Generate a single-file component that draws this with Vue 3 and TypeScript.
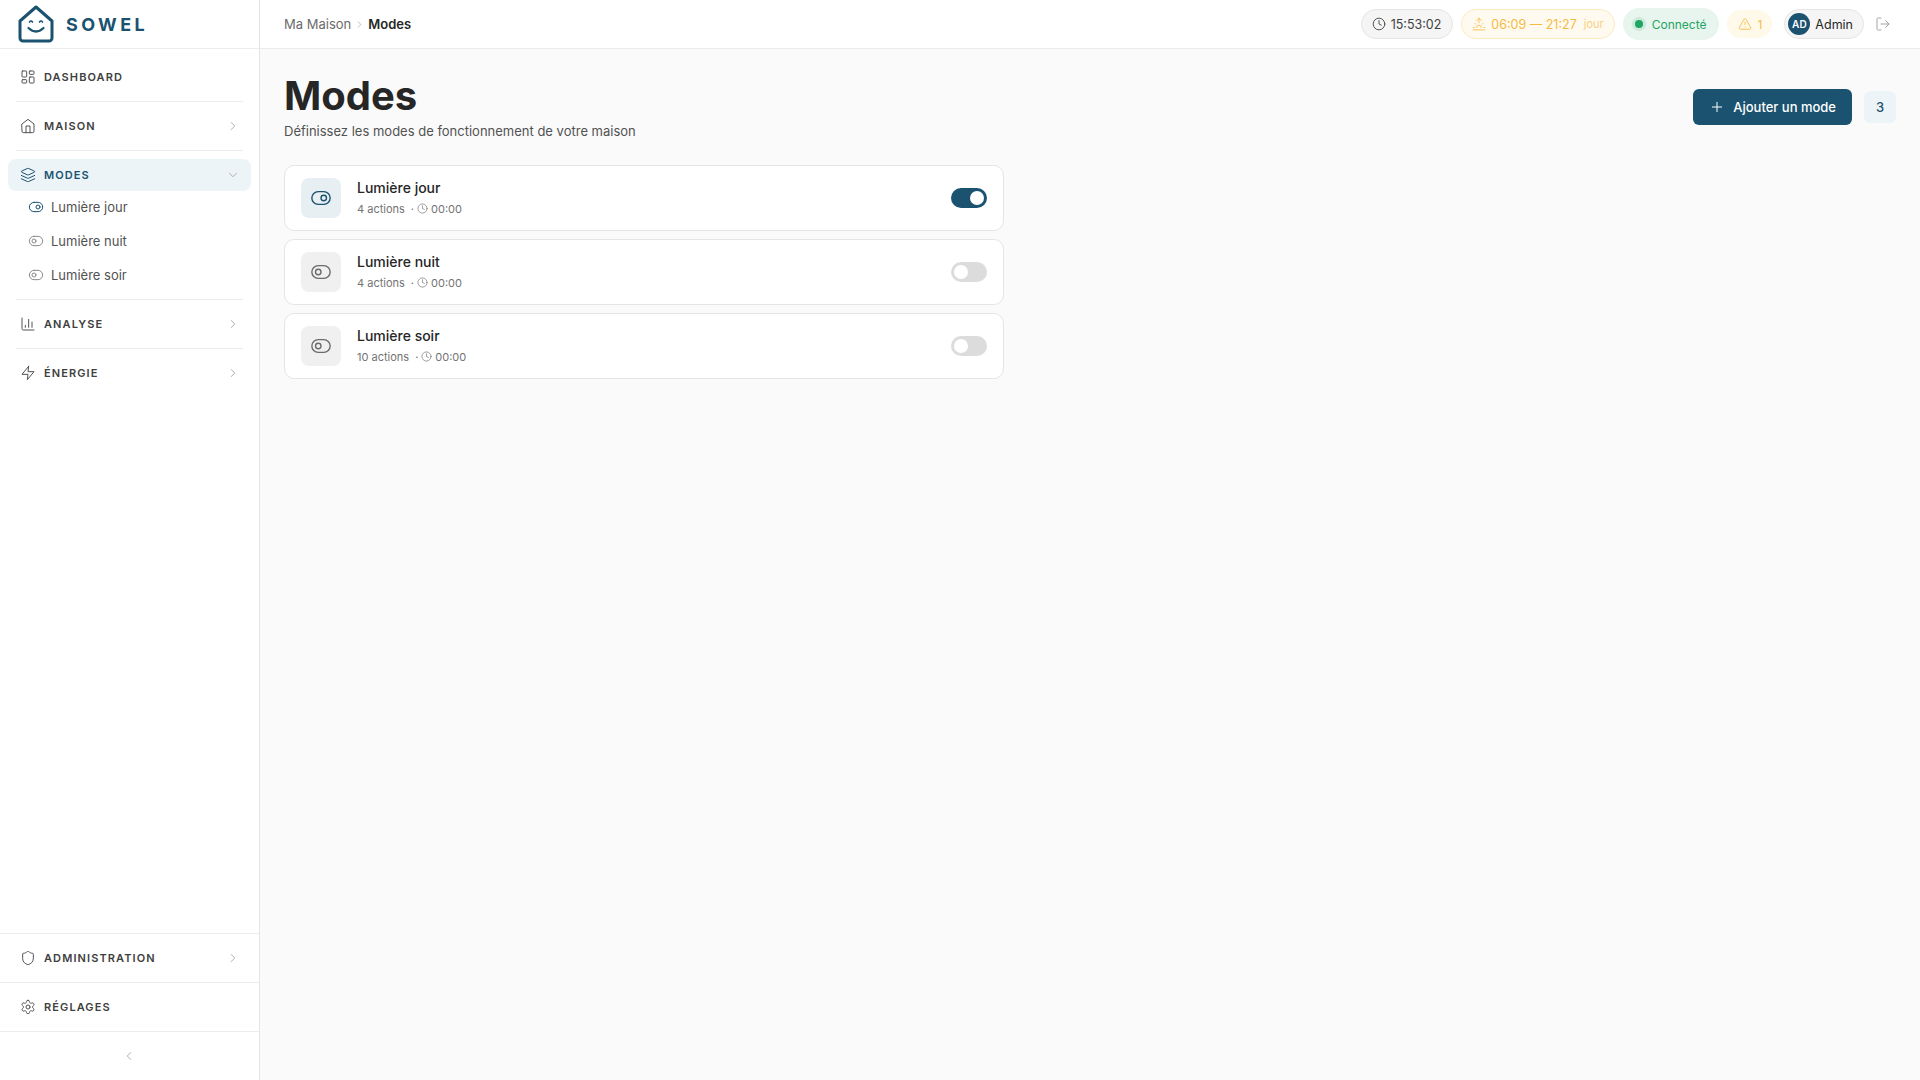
<template>
  <div class="layout">
    <aside class="sidebar">
      <div class="brand">
        <svg class="logo" viewBox="0 0 36 38" fill="none" stroke="#1a5270" stroke-width="3" stroke-linejoin="round" stroke-linecap="round">
          <path d="M18 2 L34 16 V33 a3 3 0 0 1 -3 3 H5 a3 3 0 0 1 -3 -3 V16 Z" />
          <path d="M11.5 17 q1.5 -2 3 0 M21.5 17 q1.5 -2 3 0" stroke-width="1.6" />
          <path d="M10.5 23 q7.5 7 15 0" stroke-width="2.2" />
        </svg>
        <span class="brand-name">SOWEL</span>
      </div>

      <nav class="nav">
        <template v-for="(item, i) in navItems" :key="item.label">
          <hr v-if="i > 0" class="divider" />
          <div class="nav-row" :class="{ active: item.open }">
            <svg class="icon" viewBox="0 0 24 24" v-html="icons[item.icon]" />
            <span class="nav-label">{{ item.label }}</span>
            <svg v-if="item.chevron" class="chevron" viewBox="0 0 24 24" v-html="item.open ? icons.down : icons.right" />
          </div>
          <div v-if="item.open" class="sub-list">
            <div v-for="mode in modes" :key="mode.name" class="sub-row" :class="{ on: mode.active }">
              <svg class="icon" viewBox="0 0 24 24" v-html="mode.active ? icons.toggleOn : icons.toggleOff" />
              <span>{{ mode.name }}</span>
            </div>
          </div>
        </template>
      </nav>

      <div class="side-bottom">
        <div class="bottom-cell">
          <div class="nav-row">
            <svg class="icon" viewBox="0 0 24 24" v-html="icons.shield" />
            <span class="nav-label">ADMINISTRATION</span>
            <svg class="chevron" viewBox="0 0 24 24" v-html="icons.right" />
          </div>
        </div>
        <div class="bottom-cell">
          <div class="nav-row">
            <svg class="icon" viewBox="0 0 24 24" v-html="icons.settings" />
            <span class="nav-label">RÉGLAGES</span>
          </div>
        </div>
        <div class="collapse">
          <svg class="chevron" viewBox="0 0 24 24" v-html="icons.left" />
        </div>
      </div>
    </aside>

    <div class="page">
      <header class="topbar">
        <div class="crumbs">
          <span>Ma Maison</span>
          <svg class="crumb-sep" viewBox="0 0 24 24" v-html="icons.right" />
          <strong>Modes</strong>
        </div>
        <div class="status">
          <div class="pill clock">
            <svg class="icon" viewBox="0 0 24 24" v-html="icons.clock" />
            <span>15:53:02</span>
          </div>
          <div class="pill sun">
            <svg class="icon" viewBox="0 0 24 24" v-html="icons.sunrise" />
            <span>06:09 — 21:27</span>
            <small>jour</small>
          </div>
          <div class="pill live">
            <i class="dot"></i>
            <span>Connecté</span>
          </div>
          <div class="pill alert">
            <svg class="icon" viewBox="0 0 24 24" v-html="icons.warning" />
            <span>1</span>
          </div>
          <div class="pill user">
            <span class="avatar">AD</span>
            <span>Admin</span>
          </div>
          <button class="logout">
            <svg class="icon" viewBox="0 0 24 24" v-html="icons.logout" />
          </button>
        </div>
      </header>

      <main class="content">
        <div class="page-head">
          <div>
            <h1>Modes</h1>
            <p>Définissez les modes de fonctionnement de votre maison</p>
          </div>
          <div class="head-actions">
            <button class="add-btn">
              <svg class="icon" viewBox="0 0 24 24" v-html="icons.plus" />
              Ajouter un mode
            </button>
            <span class="count">{{ modes.length }}</span>
          </div>
        </div>

        <div class="mode-list">
          <div v-for="mode in modes" :key="mode.name" class="mode-card">
            <div class="mode-icon" :class="{ on: mode.active }">
              <svg viewBox="0 0 24 24" v-html="mode.active ? icons.toggleOn : icons.toggleOff" />
            </div>
            <div class="mode-text">
              <div class="mode-name">{{ mode.name }}</div>
              <div class="mode-meta">
                <span>{{ mode.actions }} actions</span>
                <span class="sep">·</span>
                <svg viewBox="0 0 24 24" v-html="icons.clock" />
                <span>00:00</span>
              </div>
            </div>
            <span class="switch" :class="{ on: mode.active }"><i></i></span>
          </div>
        </div>
      </main>
    </div>
  </div>
</template>

<script setup lang="ts">
const icons: Record<string, string> = {
  dashboard: '<rect x="3" y="3" width="7" height="9" rx="1"/><rect x="14" y="3" width="7" height="5" rx="1"/><rect x="14" y="12" width="7" height="9" rx="1"/><rect x="3" y="16" width="7" height="5" rx="1"/>',
  home: '<path d="m3 9 9-7 9 7v11a2 2 0 0 1-2 2H5a2 2 0 0 1-2-2z"/><path d="M9 22V12h6v10"/>',
  layers: '<path d="m12.83 2.18a2 2 0 0 0-1.66 0L2.6 6.08a1 1 0 0 0 0 1.83l8.58 3.91a2 2 0 0 0 1.66 0l8.58-3.9a1 1 0 0 0 0-1.83Z"/><path d="m22 17.65-9.17 4.16a2 2 0 0 1-1.66 0L2 17.65"/><path d="m22 12.65-9.17 4.16a2 2 0 0 1-1.66 0L2 12.65"/>',
  chart: '<path d="M3 3v16a2 2 0 0 0 2 2h16"/><path d="M18 17V9"/><path d="M13 17V5"/><path d="M8 17v-3"/>',
  zap: '<path d="M13 2 3 14h9l-1 8 10-12h-9l1-8z"/>',
  shield: '<path d="M20 13c0 5-3.5 7.5-7.66 8.95a1 1 0 0 1-.67-.01C7.5 20.5 4 18 4 13V6a1 1 0 0 1 1-1c2 0 4.5-1.2 6.24-2.72a1.17 1.17 0 0 1 1.52 0C14.51 3.81 17 5 19 5a1 1 0 0 1 1 1z"/>',
  settings: '<path d="M12.22 2h-.44a2 2 0 0 0-2 2v.18a2 2 0 0 1-1 1.73l-.43.25a2 2 0 0 1-2 0l-.15-.08a2 2 0 0 0-2.73.73l-.22.38a2 2 0 0 0 .73 2.73l.15.1a2 2 0 0 1 1 1.72v.51a2 2 0 0 1-1 1.74l-.15.09a2 2 0 0 0-.73 2.73l.22.38a2 2 0 0 0 2.73.73l.15-.08a2 2 0 0 1 2 0l.43.25a2 2 0 0 1 1 1.73V20a2 2 0 0 0 2 2h.44a2 2 0 0 0 2-2v-.18a2 2 0 0 1 1-1.73l.43-.25a2 2 0 0 1 2 0l.15.08a2 2 0 0 0 2.73-.73l.22-.39a2 2 0 0 0-.73-2.73l-.15-.08a2 2 0 0 1-1-1.74v-.5a2 2 0 0 1 1-1.74l.15-.09a2 2 0 0 0 .73-2.73l-.22-.38a2 2 0 0 0-2.73-.73l-.15.08a2 2 0 0 1-2 0l-.43-.25a2 2 0 0 1-1-1.73V4a2 2 0 0 0-2-2z"/><circle cx="12" cy="12" r="3"/>',
  right: '<path d="m9 18 6-6-6-6"/>',
  left: '<path d="m15 18-6-6 6-6"/>',
  down: '<path d="m6 9 6 6 6-6"/>',
  toggleOn: '<rect x="2" y="5" width="20" height="14" rx="7"/><circle cx="15" cy="12" r="3"/>',
  toggleOff: '<rect x="2" y="5" width="20" height="14" rx="7"/><circle cx="9" cy="12" r="3"/>',
  clock: '<circle cx="12" cy="12" r="10"/><path d="M12 6v6l4 2"/>',
  sunrise: '<path d="M12 2v8"/><path d="m4.93 10.93 1.41 1.41"/><path d="M2 18h2"/><path d="M20 18h2"/><path d="m19.07 10.93-1.41 1.41"/><path d="M22 22H2"/><path d="m8 6 4-4 4 4"/><path d="M16 18a4 4 0 0 0-8 0"/>',
  warning: '<path d="m21.73 18-8-14a2 2 0 0 0-3.48 0l-8 14A2 2 0 0 0 4 21h16a2 2 0 0 0 1.73-3"/><path d="M12 9v4"/><path d="M12 17h.01"/>',
  logout: '<path d="M9 21H5a2 2 0 0 1-2-2V5a2 2 0 0 1 2-2h4"/><path d="m16 17 5-5-5-5"/><path d="M21 12H9"/>',
  plus: '<path d="M5 12h14"/><path d="M12 5v14"/>'
}

const navItems = [
  { label: 'DASHBOARD', icon: 'dashboard', chevron: false, open: false },
  { label: 'MAISON', icon: 'home', chevron: true, open: false },
  { label: 'MODES', icon: 'layers', chevron: true, open: true },
  { label: 'ANALYSE', icon: 'chart', chevron: true, open: false },
  { label: 'ÉNERGIE', icon: 'zap', chevron: true, open: false }
]

const modes = [
  { name: 'Lumière jour', actions: 4, active: true },
  { name: 'Lumière nuit', actions: 4, active: false },
  { name: 'Lumière soir', actions: 10, active: false }
]
</script>

<style>
body {
  background: #fafafa;
}
</style>

<style scoped>
.layout {
  display: flex;
  height: 1080px;
  font-family: Inter, "Liberation Sans", sans-serif;
  color: #262626;
  background: #fafafa;
}
svg {
  fill: none;
  stroke: currentColor;
  stroke-width: 1.5;
  stroke-linecap: round;
  stroke-linejoin: round;
  flex-shrink: 0;
}
.icon {
  width: 16px;
  height: 16px;
}

/* sidebar */
.sidebar {
  width: 260px;
  flex-shrink: 0;
  display: flex;
  flex-direction: column;
  background: #fff;
  border-right: 1px solid #e5e5e5;
  box-sizing: border-box;
}
.brand {
  height: 49px;
  box-sizing: border-box;
  border-bottom: 1px solid #ececec;
  display: flex;
  align-items: center;
  padding-left: 18px;
  gap: 12px;
}
.logo {
  width: 36px;
  height: 38px;
  stroke: #1a5270;
  stroke-width: 3;
}
.brand-name {
  font-size: 18px;
  font-weight: 700;
  letter-spacing: 0.19em;
  color: #1a5270;
}
.nav {
  flex: 1;
  padding: 12px 8px 0;
}
.divider {
  border: 0;
  border-top: 1px solid #ececec;
  margin: 8px;
}
.nav-row {
  height: 32px;
  display: flex;
  align-items: center;
  gap: 8px;
  padding: 0 11px 0 12px;
  border-radius: 8px;
  color: #525252;
}
.nav-label {
  flex: 1;
  font-size: 11px;
  font-weight: 600;
  letter-spacing: 0.1em;
  color: #404040;
}
.nav-row.active {
  background: #edf4f8;
  color: #1a5270;
}
.nav-row.active .nav-label {
  color: #1a5270;
}
.chevron {
  width: 14px;
  height: 14px;
  color: #a3a3a3;
}
.sub-list {
  margin: -1px 0 -1px;
}
.sub-row {
  height: 34px;
  display: flex;
  align-items: center;
  gap: 7px;
  padding-left: 20px;
  font-size: 13px;
  color: #525252;
}
.sub-row .icon {
  color: #8a8a8a;
}
.sub-row.on .icon {
  color: #1a5270;
}
.side-bottom {
  border-top: 1px solid #ececec;
}
.bottom-cell {
  padding: 8px;
  border-bottom: 1px solid #ececec;
}
.collapse {
  height: 48px;
  display: flex;
  align-items: center;
  justify-content: center;
  padding-right: 1px;
}

/* topbar */
.page {
  flex: 1;
  min-width: 0;
  display: flex;
  flex-direction: column;
}
.topbar {
  height: 49px;
  box-sizing: border-box;
  flex-shrink: 0;
  background: #fff;
  border-bottom: 1px solid #ececec;
  display: flex;
  align-items: center;
  justify-content: space-between;
  padding: 0 24px;
}
.crumbs {
  display: flex;
  align-items: center;
  gap: 3px;
  font-size: 13px;
  color: #6b6b6b;
}
.crumbs strong {
  font-weight: 600;
  color: #262626;
}
.crumb-sep {
  width: 11px;
  height: 11px;
  color: #a3a3a3;
}
.status {
  display: flex;
  align-items: center;
  gap: 8px;
}
.pill {
  height: 30px;
  box-sizing: border-box;
  border-radius: 15px;
  display: flex;
  align-items: center;
  gap: 5px;
  font-size: 12.5px;
  padding: 0 10px;
  border: 1px solid transparent;
}
.pill .icon {
  width: 14px;
  height: 14px;
}
.clock {
  background: #f5f5f5;
  border-color: #e5e5e5;
  color: #404040;
  padding-right: 11px;
}
.sun {
  background: #fffaf0;
  border-color: #fbe9c2;
  color: #f5bb45;
}
.sun small {
  font-size: 11px;
  margin-left: 2px;
  color: #f8d080;
}
.live {
  height: 32px;
  border-radius: 16px;
  background: #e8f5ee;
  color: #1fa562;
  font-size: 12px;
  padding: 0 12px 0 8px;
  gap: 7px;
}
.dot {
  width: 8px;
  height: 8px;
  border-radius: 50%;
  background: #1fa562;
  box-shadow: 0 0 0 3px #cde9da;
  margin-left: 3px;
  margin-right: 2px;
}
.alert {
  height: 28px;
  background: #fff9ea;
  color: #f5bb45;
  padding: 0 9px 0 10px;
  font-size: 12px;
}
.user {
  background: #f5f5f5;
  border-color: #e5e5e5;
  padding: 0 10px 0 3px;
  gap: 5px;
  color: #262626;
  margin: 0 -2px 0 4px;
}
.avatar {
  width: 22px;
  height: 22px;
  border-radius: 50%;
  background: #1a5270;
  color: #fff;
  font-size: 10px;
  font-weight: 600;
  display: flex;
  align-items: center;
  justify-content: center;
}
.logout {
  border: 0;
  background: none;
  padding: 5px;
  display: flex;
  color: #a3a3a3;
}

/* content */
.content {
  padding: 24px;
}
.page-head {
  display: flex;
  align-items: center;
  justify-content: space-between;
  margin-bottom: 24px;
}
h1 {
  margin: 0;
  font-size: 40px;
  line-height: 46px;
  font-weight: 700;
  color: #262626;
}
.page-head p {
  margin: 2px 0 0;
  font-size: 13px;
  line-height: 20px;
  color: #525252;
}
.head-actions {
  display: flex;
  align-items: center;
  gap: 12px;
}
.add-btn {
  height: 36px;
  display: flex;
  align-items: center;
  gap: 8px;
  padding: 0 16px;
  border: 0;
  border-radius: 6px;
  background: #1a5270;
  color: #fff;
  font: 500 13px Inter, "Liberation Sans", sans-serif;
}
.count {
  width: 32px;
  height: 32px;
  border-radius: 6px;
  background: #edf4f8;
  color: #1a5270;
  font-size: 13px;
  font-weight: 500;
  display: flex;
  align-items: center;
  justify-content: center;
}
.mode-list {
  width: 720px;
  display: flex;
  flex-direction: column;
  gap: 8px;
}
.mode-card {
  height: 66px;
  box-sizing: border-box;
  display: flex;
  align-items: center;
  gap: 16px;
  padding: 0 16px;
  background: #fff;
  border: 1px solid #e5e5e5;
  border-radius: 10px;
}
.mode-icon {
  width: 40px;
  height: 40px;
  border-radius: 8px;
  background: #f0f0f0;
  color: #6b6b6b;
  display: flex;
  align-items: center;
  justify-content: center;
}
.mode-icon svg {
  width: 22px;
  height: 22px;
}
.mode-icon.on {
  background: #e8eff3;
  color: #1a5270;
}
.mode-text {
  flex: 1;
  margin-top: -2px;
}
.mode-name {
  font-size: 14px;
  font-weight: 500;
  line-height: 20px;
  color: #262626;
}
.mode-meta {
  display: flex;
  align-items: center;
  margin-top: 3px;
  font-size: 11px;
  line-height: 16px;
  color: #737373;
}
.mode-meta svg {
  width: 11px;
  height: 11px;
  margin-right: 3px;
}
.sep {
  margin: 0 3px 0 6px;
}
.switch {
  width: 36px;
  height: 20px;
  border-radius: 10px;
  background: #dcdcdc;
  display: flex;
  align-items: center;
  padding: 0 3px;
  box-sizing: border-box;
}
.switch i {
  width: 14px;
  height: 14px;
  border-radius: 50%;
  background: #fff;
}
.switch.on {
  background: #1a5270;
  justify-content: flex-end;
}
</style>
